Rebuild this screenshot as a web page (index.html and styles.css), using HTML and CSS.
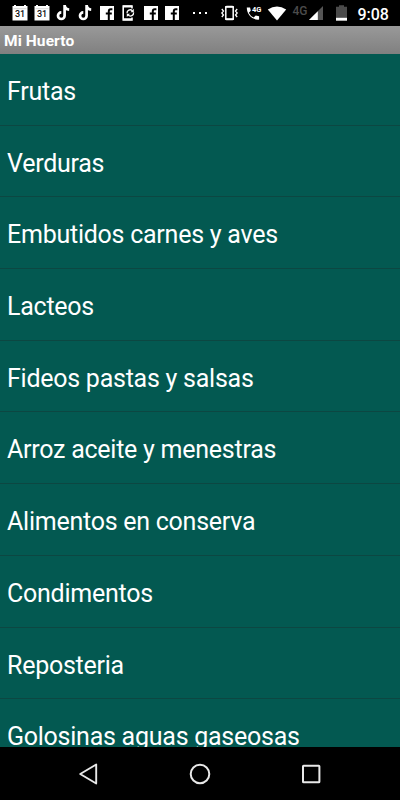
FILE: index.html
```html
<!DOCTYPE html>
<html lang="es">
<head>
  <meta charset="UTF-8">
  <meta name="viewport" content="width=device-width, initial-scale=1">
  <title>Mi Huerto</title>
  <link rel="stylesheet" href="styles.css">
</head>
<body>
  <!-- shared icons -->
  <svg class="defs" width="0" height="0">
    <symbol id="calendar" viewBox="0 0 16 16">
      <path d="M.5 1H2V0h2v1h8V0h2v1h1.500v14.500H.5z" fill="#fff"/>
      <path d="M1.500 3.700h13" stroke="#bbb" stroke-width=".6"/>
      <text x="8" y="12.300" class="cal-day">31</text>
    </symbol>
    <symbol id="tiktok" viewBox="0 0 14 16">
      <path d="M8.600 0v10.700a3.300 3.300 0 1 1-3.300-3.300M8.600.2c.2 2.800 1.900 4.300 4.600 4.500" fill="none" stroke="#fff" stroke-width="2.700"/>
    </symbol>
    <symbol id="facebook" viewBox="0 0 14 14">
      <path d="M0 0h14v14H0z" fill="#fff"/>
      <path d="M8.800 14V5.200q0-2 2-2H12.400M5.800 7.600h6" fill="none" stroke="#000" stroke-width="2"/>
    </symbol>
  </svg>

  <div class="status-bar">
    <div class="notifications">
      <svg width="16" height="16"><use href="#calendar"/></svg>
      <svg width="16" height="16"><use href="#calendar"/></svg>
      <svg width="14" height="16"><use href="#tiktok"/></svg>
      <svg width="14" height="16"><use href="#tiktok"/></svg>
      <svg width="14" height="14"><use href="#facebook"/></svg>
      <svg width="13" height="16" viewBox="0 0 13 16">
        <path d="M10 3.500V1H1.200v14H10v-2.500" fill="none" stroke="#fff" stroke-width="1.600"/>
        <path d="M1 1.600h9M1 14.300h9" stroke="#fff" stroke-width="2"/>
        <path d="M5 8.300a3.200 3.200 0 0 1 5.400-2.600M11.600 7.400a3.200 3.200 0 0 1-5.400 2.700" fill="none" stroke="#fff" stroke-width="1.300"/>
        <path d="M11.800 3.800v3.400H8.500zM4.800 12V8.700h3.300z" fill="#fff"/>
      </svg>
      <svg width="14" height="14"><use href="#facebook"/></svg>
      <svg width="14" height="14"><use href="#facebook"/></svg>
    </div>
    <svg class="more" width="15" height="4" viewBox="0 0 15 4">
      <path d="M0 1h2v2H0zM6 1h2v2H6zM12 1h2v2h-2z" fill="#fff"/>
    </svg>
    <div class="system">
      <svg class="vibrate" width="17" height="16" viewBox="0 0 17 16">
        <rect x="4.800" y="1.500" width="7.400" height="13" rx=".8" fill="none" stroke="#fff" stroke-width="1.500"/>
        <path d="M4 2h9M4 14h9" stroke="#fff" stroke-width="1.500"/>
        <path d="M.8 4l1.700 2L.8 8l1.700 2-1.700 2M16.200 4l-1.700 2 1.700 2-1.700 2 1.700 2" fill="none" stroke="#fff" stroke-width="1.300"/>
      </svg>
      <svg class="call" width="16" height="16" viewBox="0 0 16 16">
        <path d="M.8 2.500h3.300l.7 3.200-2 2q1.700 3.400 4.900 4.900l2-2 3.400.7v3.300Q7.500 15 4.100 11.200.7 7.500.8 2.500z" fill="#fff"/>
        <text x="6" y="6.700" class="call-net">4G</text>
      </svg>
      <svg class="wifi" width="20" height="15" viewBox="0 0 20 15">
        <path d="M10 14.600L.8 3.600Q10-2.800 19.200 3.600z" fill="#fff"/>
      </svg>
      <span class="network">4G</span>
      <svg class="signal" width="14" height="14" viewBox="0 0 14 14">
        <path d="M14 0v14H0z" fill="#555"/>
        <path d="M8.800 5.200V14H0z" fill="#fff"/>
      </svg>
      <svg class="battery" width="11" height="16" viewBox="0 0 11 16">
        <path d="M0 1.800h3V.3h5v1.500h3v14H0z" fill="#4b4b4b"/>
        <path d="M0 12.800h11v2.800H0z" fill="#fff"/>
      </svg>
      <span class="clock">9:08</span>
    </div>
  </div>

  <h1 class="title-bar">Mi Huerto</h1>

  <ul class="list">
    <li>Frutas</li>
    <li>Verduras</li>
    <li>Embutidos carnes y aves</li>
    <li>Lacteos</li>
    <li>Fideos pastas y salsas</li>
    <li>Arroz aceite y menestras</li>
    <li>Alimentos en conserva</li>
    <li>Condimentos</li>
    <li>Reposteria</li>
    <li>Golosinas aguas gaseosas</li>
  </ul>

  <div class="nav-bar">
    <svg width="22" height="24" viewBox="0 0 22 24">
      <path d="M18.200 2.500v19L2.200 12z" fill="none" stroke="#e8e8e8" stroke-width="1.900" stroke-linejoin="round"/>
    </svg>
    <svg width="22" height="24" viewBox="0 0 22 24">
      <circle cx="11" cy="12" r="9.300" fill="none" stroke="#e8e8e8" stroke-width="2"/>
    </svg>
    <svg width="22" height="24" viewBox="0 0 22 24">
      <rect x="3" y="3.700" width="16.400" height="16.600" rx=".6" fill="none" stroke="#e8e8e8" stroke-width="2"/>
    </svg>
  </div>
</body>
</html>
```

FILE: styles.css
```css
* {
  box-sizing: border-box;
}

body {
  margin: 0;
  height: 800px;
  display: flex;
  flex-direction: column;
  overflow: hidden;
  background-color: #000;
  color: #fff;
  font-family: Roboto, sans-serif;
}

svg {
  display: block;
  flex: none;
}

.defs {
  position: absolute;
}

.status-bar {
  flex: none;
  height: 26px;
  padding-left: 9px;
  display: flex;
  align-items: center;
  background-color: #000;
}

.notifications {
  display: grid;
  grid-template-columns: repeat(8, 21.8px);
  justify-items: center;
  align-items: center;
}

.cal-day {
  font-size: 9px;
  font-weight: 500;
  text-anchor: middle;
  fill: #111;
}

.more {
  margin-left: 10px;
}

.system {
  display: flex;
  align-items: center;
  margin-left: 13px;
}

.call {
  margin-left: 8px;
}

.call-net {
  font-size: 7.5px;
  font-weight: 700;
  fill: #fff;
}

.wifi {
  margin-left: 5px;
}

.network {
  width: 17px;
  margin-left: 5px;
  margin-top: -5px;
  font-size: 12px;
  font-weight: 500;
  line-height: 12px;
  color: #4b4b4b;
}

.battery {
  margin-left: 13px;
}

.clock {
  margin-left: 10px;
  margin-top: 3px;
  font-size: 16px;
  font-weight: 500;
  line-height: 18px;
}

.title-bar {
  flex: none;
  height: 28px;
  margin: 0;
  padding-left: 4px;
  font-size: 15.5px;
  font-weight: 700;
  letter-spacing: 0.1px;
  line-height: 30px;
  background: linear-gradient(#999, #808080);
}

.list {
  flex: 1;
  min-height: 0;
  margin: 0;
  padding: 0;
  overflow: hidden;
  list-style: none;
  background-color: #035951;
}

.list li {
  height: 71.7px;
  padding-left: 7px;
  border-bottom: 1px solid #0c4742;
  font-size: 25px;
  letter-spacing: -0.25px;
  line-height: 75px;
  white-space: nowrap;
}

.nav-bar {
  flex: none;
  height: 53px;
  display: flex;
  justify-content: center;
  align-items: center;
  gap: 89px;
  background-color: #000;
}
```
